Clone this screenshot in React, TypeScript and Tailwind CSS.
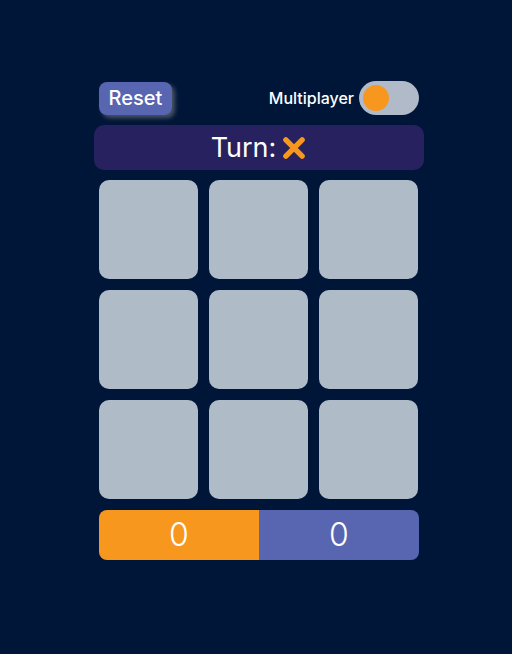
import { useState } from "react";

const cells = Array.from({ length: 9 }, (_, i) => i);

function Cross({ className }: { className?: string }) {
  return (
    <svg viewBox="0 0 24 24" className={className} fill="none">
      <path
        d="M4.5 4.5L19.5 19.5M19.5 4.5L4.5 19.5"
        stroke="#f7971e"
        strokeWidth="5"
        strokeLinecap="round"
      />
    </svg>
  );
}

export default function App() {
  const [multi, setMulti] = useState(false);

  return (
    <div
      className="min-h-[654px] w-full bg-[#001639] pl-[6px] text-white"
      style={{ fontFamily: "Inter, 'Noto Sans', sans-serif" }}
    >
      <div className="mx-auto flex w-[330px] flex-col items-center pt-[81px]">
        {/* Top controls */}
        <div className="flex w-[320px] items-center justify-between">
          <button className="h-[33px] w-[73px] rounded-lg bg-[#5865b0] text-[20px] font-medium text-white shadow-[3px_3px_4px_rgba(160,160,150,0.45)]">
            Reset
          </button>
          <div className="flex items-center gap-[5px]">
            <span className="text-[16px] font-medium">Multiplayer</span>
            <button
              onClick={() => setMulti(!multi)}
              className="flex h-[34px] w-[60px] items-center rounded-full bg-[#b0bac8] px-[4px]"
            >
              <span
                className={
                  multi
                    ? "ml-auto h-[26px] w-[26px] rounded-full bg-[#f7971e]"
                    : "h-[26px] w-[26px] rounded-full bg-[#f7971e]"
                }
              />
            </button>
          </div>
        </div>

        {/* Turn banner */}
        <div className="mt-[10px] flex h-[45px] w-[330px] items-center justify-center gap-[5px] rounded-[10px] bg-[#27215f]">
          <span className="text-[27px] font-normal leading-none">Turn:</span>
          <Cross className="h-[26px] w-[26px]" />
        </div>

        {/* Board */}
        <div className="mt-[10px] grid w-[320px] grid-cols-[99px_99px_99px] gap-[11px]">
          {cells.map((c) => (
            <div key={c} className="h-[99px] w-[99px] rounded-[10px] bg-[#b0bbc8]" />
          ))}
        </div>

        {/* Score */}
        <div className="mt-[11px] flex h-[50px] w-[320px] overflow-hidden rounded-lg">
          <div className="flex flex-1 items-center justify-center bg-[#f7971e] text-[32px] font-light">
            0
          </div>
          <div className="flex flex-1 items-center justify-center bg-[#5865b0] text-[32px] font-light">
            0
          </div>
        </div>
      </div>
    </div>
  );
}
